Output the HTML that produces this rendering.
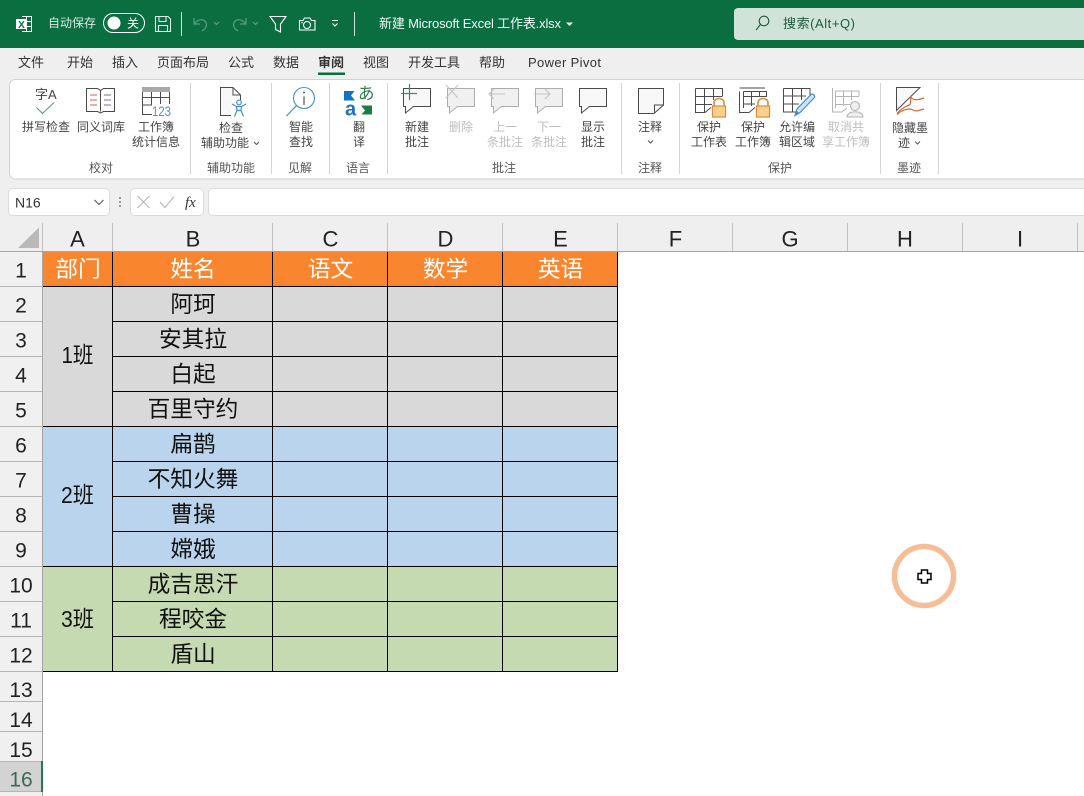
<!DOCTYPE html>
<html lang="zh-CN"><head><meta charset="utf-8"><title>Excel</title>
<style>
html,body{margin:0;padding:0;background:#fff;width:1084px;height:796px;overflow:hidden}
svg{display:block;position:absolute;left:0;top:0}
text{font-family:"Liberation Sans","Noto Sans CJK SC",sans-serif}
.t{font-size:13px;fill:#333}
.r{font-size:12px;fill:#444;text-anchor:middle}
.d{font-size:12px;fill:#bdbdbd;text-anchor:middle}
.g{font-size:12px;fill:#555;text-anchor:middle}
.h{font-size:22px;fill:#222;text-anchor:middle}
.n{font-size:21px;fill:#222;text-anchor:middle}
.c{font-size:22.7px;fill:#111;text-anchor:middle}
.o{font-size:22.7px;fill:#fff;text-anchor:middle}
.i{fill:none;stroke:#4a4a4a;stroke-width:1}
.b{fill:#f8f8f8;stroke:#4a4a4a;stroke-width:1}
.m{fill:none;stroke:#b5b5b5;stroke-width:1}
.x{fill:#f0f0f0;stroke:#adadad;stroke-width:1}
.l{fill:#fdd08f;stroke:#d98a3e;stroke-width:1.2}
.s{fill:none;stroke:#d98a3e;stroke-width:1.6}
</style></head><body>
<svg width="1084" height="796" viewBox="0 0 1084 796" xmlns="http://www.w3.org/2000/svg">
<!-- backgrounds -->
<rect width="1084" height="796" fill="#fff"/>
<rect width="1084" height="252" fill="#efefef"/>
<rect width="1084" height="48" fill="#0a6e41"/>

<!-- title bar -->
<g fill="none" stroke="#fff" stroke-width="1"><path d="M22 16.5H31.5V31.5H22"/><path d="M22 21.5H31.5M22 26.5H31.5M26.5 16.5V31.5"/></g>
<rect x="16" y="19" width="11" height="10" fill="#fff"/>
<text x="21.500" y="28" font-size="10" font-weight="bold" fill="#0a6e41" text-anchor="middle">X</text>
<text x="48" y="27" font-size="12" fill="#dbeae2">自动保存</text>
<rect x="103.500" y="13.500" width="41" height="19" rx="9.500" fill="none" stroke="#fff" stroke-width="1"/>
<circle cx="114" cy="23" r="6.500" fill="#fff"/>
<text x="133" y="27.500" font-size="12" fill="#fff" text-anchor="middle">关</text>
<g fill="none" stroke="#dfeee6" stroke-width="1.100"><path d="M155.500 16.500H168L170.500 19V31.500H155.500Z"/><path d="M159 16.500V21.500H166V16.500M158.500 31.500V25.500H167.500V31.500"/></g>
<path d="M181.500 12V36" stroke="#cfe3d8" stroke-width="1"/>
<g fill="none" stroke="#5b9f80" stroke-width="1.200"><path d="M194 18V24H200M194.500 23.500C198 19 204 18.500 206 22.500C207.500 26 205 29.500 202 31"/><path d="M246 18V24H240M245.500 23.500C242 19 236 18.500 234 22.500C232.500 26 235 29.500 238 31"/><path d="M214 22L216.500 24.500L219 22M253 22L255.500 24.500L258 22"/></g>
<g fill="none" stroke="#fff" stroke-width="1.100"><path d="M270 16.500H286L280.500 24V32L275.500 29.500V24Z"/><path d="M299.500 20.500H303L304.500 18H310L311.500 20.500H315V30H299.500Z"/><circle cx="307" cy="25" r="3.500"/><path d="M332 20.500H338M332.500 23.500L335 26L337.500 23.500"/></g>
<circle cx="302" cy="22.500" r="0.800" fill="#fff"/>
<path d="M354.500 12V36" stroke="#cfe3d8" stroke-width="1"/>
<text x="379" y="28" font-size="13" fill="#f2f7f4" textLength="182" lengthAdjust="spacing">新建 Microsoft Excel 工作表.xlsx</text>
<path d="M566 22.500H573L569.500 26Z" fill="#eef5f1"/>
<rect x="734" y="8" width="360" height="32" rx="4" fill="#cfe3d8"/>
<g fill="none" stroke="#20583e" stroke-width="1.100"><circle cx="764" cy="21" r="4.800"/><path d="M760.500 24.500L756 30"/></g>
<text x="783" y="28" font-size="13" fill="#21583f" textLength="72" lengthAdjust="spacing">搜索(Alt+Q)</text>

<!-- tabs -->
<text class="t" x="18" y="67">文件</text>
<text class="t" x="67" y="67">开始</text>
<text class="t" x="112" y="67">插入</text>
<text class="t" x="157" y="67">页面布局</text>
<text class="t" x="228" y="67">公式</text>
<text class="t" x="273" y="67">数据</text>
<text class="t" x="318" y="67" font-weight="bold">审阅</text>
<text class="t" x="363" y="67">视图</text>
<text class="t" x="408" y="67">开发工具</text>
<text class="t" x="479" y="67">帮助</text>
<text class="t" x="528" y="67" textLength="73" lengthAdjust="spacing">Power Pivot</text>
<rect x="318" y="72.500" width="27" height="2.500" fill="#0a6e41"/>

<!-- ribbon panel -->
<rect x="9.500" y="79.500" width="1090" height="99.500" rx="6" fill="#fff" stroke="#d2d2d2"/>
<g stroke="#d4d4d4"><path d="M190.500 83V174M271.500 83V174M329.500 83V174M387.500 83V174M621.500 83V174M679.500 83V174M880.500 83V174M938.500 83V174"/></g>

<!-- ribbon icons -->
<text x="35" y="99" font-size="13" fill="#444">字A</text>
<path d="M36.500 107.500L42.500 113.500L54 102.500" fill="none" stroke="#5c9c78" stroke-width="1.100"/>
<path class="i" d="M86.500 88.500H97.500L100.500 90.500L103.500 88.500H114.500V111.500H103.500L100.500 113L97.500 111.500H86.500ZM100.500 90.500V111.500"/>
<path d="M90 95H97M90 100H97M90 105H97" stroke="#c8654a" stroke-width="1"/>
<path d="M104 95H111M104 100H111M104 105H111" stroke="#777" stroke-width="1"/>
<rect x="142.500" y="87.500" width="27" height="27" class="i"/>
<rect x="142" y="87" width="28" height="5" fill="#a9a9a9"/>
<path class="i" d="M142.500 97.500H169.500M142.500 105H152M151.500 92V105M160.500 92V104"/>
<rect x="152" y="104" width="19" height="12" fill="#fff"/>
<text x="152" y="116" font-size="14" fill="#4b94cc" textLength="19" lengthAdjust="spacingAndGlyphs">123</text>

<path class="b" d="M233 87.500H220.500V115.500H231"/>
<path class="i" d="M233 87.500L240.500 95V100M233 87.500V95H240.500"/>
<g fill="none" stroke="#3f8fd0" stroke-width="1.200"><circle cx="239" cy="102.500" r="2.300"/><path d="M232 104L236.500 106.500H241.500L246 104M236.500 106.500L237 110.500L234.500 116.500M241.500 106.500L241 110.500L243.500 116.500M237 110.500H241"/></g>

<circle cx="304" cy="98" r="10.500" fill="none" stroke="#3f8fd0" stroke-width="1.100"/>
<path d="M296.500 105.500L286.500 116" stroke="#3f8fd0" stroke-width="1.200"/>
<path d="M304 96.500V105" stroke="#444" stroke-width="1.100"/><circle cx="304" cy="92.500" r="0.900" fill="#444"/>

<path d="M344 91H354.500L351 95.500L355 100.500H344Z" fill="#1272c4"/>
<text x="358" y="99" font-size="16.500" fill="#2f7d4f">あ</text>
<text x="350.500" y="115.500" font-size="20" fill="#1f72bd" text-anchor="middle" font-weight="bold">a</text>
<path d="M361 105.500H372V114.500H361.500L365 110.500Z" fill="#1c7c48"/>

<!-- comments -->
<path class="b" d="M403.500 88.500H430.500V106.500H413.500L405.500 113V106.500H403.500Z"/>
<path d="M409.500 84V100M401 93.500H417" stroke="#2f9468" stroke-width="1.200"/>
<path class="x" d="M447.500 88.500H474.500V106.500H457.500L449.500 113V106.500H447.500Z"/>
<path d="M446 85L458 98M458 85L446 98" stroke="#c4c4c4" stroke-width="1.100"/>
<path class="x" d="M491.500 88.500H518.500V106.500H501.500L493.500 113V106.500H491.500Z"/>
<path d="M489 94H505M494 89L489 94L494 99" stroke="#c4c4c4" stroke-width="1.100" fill="none"/>
<path class="x" d="M535.500 88.500H562.500V106.500H545.500L537.500 113V106.500H535.500Z"/>
<path d="M534 94H550M545 89L550 94L545 99" stroke="#c4c4c4" stroke-width="1.100" fill="none"/>
<path class="b" d="M579.500 88.500H606.500V106.500H589.500L581.500 113V106.500H579.500Z"/>

<path class="b" d="M638.500 88.500H663.500V105L654 113.500H638.500Z"/><path class="i" d="M663.500 105H654.500V113.500"/>

<!-- protect -->
<g class="i"><path d="M695.500 88.500H722.500V96M695.500 88.500V112.500H705L711 107.500M695.500 96.500H722.500M695.500 104.500H712M704.500 88.500V112M713.500 88.500V100"/></g>
<path class="s" d="M714 106V103C714 97 724 97 724 103V106"/><rect class="l" x="712.500" y="106" width="13" height="11"/>
<g class="i"><path d="M739.500 91.500V112.500H749L755 107.500M743.500 91.500H766.500V97M743.500 91.500V108M743.500 96.500H766.500M743.500 104H755M751.500 91.500V106M759.500 91.500V97M739.500 88H765"/></g>
<path class="s" d="M758 106V103C758 97 768 97 768 103V106"/><rect class="l" x="756.500" y="106" width="13" height="11"/>
<g class="i"><path d="M783.500 88.500H810V95M783.500 88.500V112H797M783.500 96H806M783.500 104H799M792.500 88.500V112M801.500 88.500V100"/></g>
<path d="M795 115.500L797 109L811 94.500C813 93 816 96 814 98L800 112.500Z" fill="#cfe4f6" stroke="#3f8fd0" stroke-width="1.200"/>
<path d="M795 115.500L796.500 110.500L799.500 113.500Z" fill="#3f8fd0"/>
<g class="m"><path d="M832.500 88V112H842L847 108M835.500 91H859V96M835.500 91V108M835.500 96.500H859M835.500 104.500H850M843.500 91V106M851.500 91V100"/></g>
<circle cx="855" cy="106" r="4.500" fill="#eee" stroke="#b5b5b5" stroke-width="1.100"/>
<path d="M847 117C847 110 863 110 863 117Z" fill="#eee" stroke="#b5b5b5" stroke-width="1.100"/>

<!-- ink -->
<path class="b" d="M896.500 87.500H920L896.500 110.500Z"/>
<path d="M924 98C918 100 913 101 911 97C910 102 912 105 907 106C903 108 899 111 897 113.500M897 114.500C903 109 910 108 913 110C917 112 920 110 924 109" fill="none" stroke="#d2693c" stroke-width="1.200"/>

<!-- ribbon labels -->
<text class="r" x="46" y="131">拼写检查</text>
<text class="r" x="101" y="131">同义词库</text>
<text class="r" x="156" y="131">工作簿</text><text class="r" x="156" y="146">统计信息</text>
<text class="r" x="231" y="132">检查</text><text class="r" x="225" y="147">辅助功能</text>
<path d="M254 142L256.500 144.500L259 142" fill="none" stroke="#555"/>
<text class="r" x="301" y="131">智能</text><text class="r" x="301" y="146">查找</text>
<text class="r" x="359" y="131">翻</text><text class="r" x="359" y="146">译</text>
<text class="r" x="417" y="131">新建</text><text class="r" x="417" y="146">批注</text>
<text class="d" x="461" y="131">删除</text>
<text class="d" x="505" y="131">上一</text><text class="d" x="505" y="146">条批注</text>
<text class="d" x="549" y="131">下一</text><text class="d" x="549" y="146">条批注</text>
<text class="r" x="593" y="131">显示</text><text class="r" x="593" y="146">批注</text>
<text class="r" x="650" y="131">注释</text>
<path d="M648 140.500L650.500 143L653 140.500" fill="none" stroke="#555"/>
<text class="r" x="709" y="131">保护</text><text class="r" x="709" y="146">工作表</text>
<text class="r" x="753" y="131">保护</text><text class="r" x="753" y="146">工作簿</text>
<text class="r" x="797" y="131">允许编</text><text class="r" x="797" y="146">辑区域</text>
<text class="d" x="846" y="131">取消共</text><text class="d" x="846" y="146">享工作簿</text>
<text class="r" x="910" y="132">隐藏墨</text><text class="r" x="904" y="147">迹</text>
<path d="M915 141.500L917.500 144L920 141.500" fill="none" stroke="#555"/>

<text class="g" x="101" y="172">校对</text>
<text class="g" x="231" y="172">辅助功能</text>
<text class="g" x="300" y="172">见解</text>
<text class="g" x="358" y="172">语言</text>
<text class="g" x="504" y="172">批注</text>
<text class="g" x="650" y="172">注释</text>
<text class="g" x="780" y="172">保护</text>
<text class="g" x="909" y="172">墨迹</text>

<!-- formula bar -->
<rect x="8.500" y="188.500" width="101" height="27" rx="4" fill="#fff" stroke="#dadada"/>
<text x="15" y="207.500" font-size="14" fill="#333">N16</text>
<path d="M94.500 200L99 204.500L103.500 200" fill="none" stroke="#555" stroke-width="1.100"/>
<g fill="#999"><rect x="119" y="197" width="2" height="2"/><rect x="119" y="201" width="2" height="2"/><rect x="119" y="205" width="2" height="2"/></g>
<rect x="130.500" y="188.500" width="73" height="27" rx="4" fill="#fff" stroke="#dadada"/>
<path d="M137.500 196L149.500 208M149.500 196L137.500 208M160 202L165 207.500L174 196.500" fill="none" stroke="#b5b5b5" stroke-width="1.100"/>
<text x="185" y="207" font-size="15" font-style="italic" fill="#333" style="font-family:'Liberation Serif',serif">fx</text>
<rect x="208.500" y="188.500" width="890" height="27" rx="4" fill="#fff" stroke="#dadada"/>

<!-- select all + headers -->
<path d="M18 248L39 227.500V248Z" fill="#b9b9b9"/>
<path d="M0 251.500H1084" stroke="#a5a5a5"/>
<g stroke="#c0c0c0"><path d="M42.500 223V251M112.500 223V251M272.500 223V251M387.500 223V251M502.500 223V251M617.500 223V251M732.500 223V251M847.500 223V251M962.500 223V251M1077.500 223V251"/></g>
<text class="h" x="77.500" y="246.500">A</text>
<text class="h" x="193" y="246.500">B</text>
<text class="h" x="330.500" y="246.500">C</text>
<text class="h" x="445.500" y="246.500">D</text>
<text class="h" x="560.500" y="246.500">E</text>
<text class="h" x="675.500" y="246.500">F</text>
<text class="h" x="790" y="246.500">G</text>
<text class="h" x="905" y="246.500">H</text>
<text class="h" x="1020" y="246.500">I</text>

<!-- row header -->
<rect x="0" y="252" width="42" height="544" fill="#f0f0f0"/>
<rect x="0" y="762" width="42" height="30" fill="#d3d3d3"/>
<path d="M42.500 252V796" stroke="#a5a5a5"/>
<g stroke="#b5b5b5"><path d="M0 286.500H42M0 321.500H42M0 356.500H42M0 391.500H42M0 426.500H42M0 461.500H42M0 496.500H42M0 531.500H42M0 566.500H42M0 601.500H42M0 636.500H42M0 671.500H42M0 701.500H42M0 731.500H42M0 761.500H42M0 791.500H42"/></g>
<rect x="41" y="761" width="2" height="31" fill="#1f7a4d"/>
<text class="n" x="21" y="277.500">1</text>
<text class="n" x="21" y="312.500">2</text>
<text class="n" x="21" y="347.500">3</text>
<text class="n" x="21" y="382.500">4</text>
<text class="n" x="21" y="417.500">5</text>
<text class="n" x="21" y="452.500">6</text>
<text class="n" x="21" y="487.500">7</text>
<text class="n" x="21" y="522.500">8</text>
<text class="n" x="21" y="557.500">9</text>
<text class="n" x="21" y="592.500">10</text>
<text class="n" x="21" y="627.500">11</text>
<text class="n" x="21" y="662.500">12</text>
<text class="n" x="21" y="697">13</text>
<text class="n" x="21" y="727">14</text>
<text class="n" x="21" y="757">15</text>
<text class="n" x="21" y="786.500" style="fill:#3d6a55">16</text>

<!-- cells -->
<rect x="43" y="252" width="575" height="35" fill="#f9862f"/>
<rect x="43" y="287" width="575" height="140" fill="#d9d9d9"/>
<rect x="43" y="427" width="575" height="140" fill="#b9d4ec"/>
<rect x="43" y="567" width="575" height="105" fill="#c6dab2"/>
<g stroke="#000" stroke-width="1">
<path d="M112.500 252V672M272.500 252V672M387.500 252V672M502.500 252V672M617.500 252V672"/>
<path d="M43 286.500H618M43 426.500H618M43 566.500H618M43 671.500H618"/>
<path d="M113 321.500H618M113 356.500H618M113 391.500H618M113 461.500H618M113 496.500H618M113 531.500H618M113 601.500H618M113 636.500H618"/>
</g>
<text class="o" x="78" y="277">部门</text>
<text class="o" x="193" y="277">姓名</text>
<text class="o" x="330.500" y="277">语文</text>
<text class="o" x="445.500" y="277">数学</text>
<text class="o" x="560.500" y="277">英语</text>
<text class="c" x="77.500" y="363" textLength="32" lengthAdjust="spacingAndGlyphs">1班</text>
<text class="c" x="77.500" y="503" textLength="33" lengthAdjust="spacingAndGlyphs">2班</text>
<text class="c" x="77.500" y="627" textLength="33" lengthAdjust="spacingAndGlyphs">3班</text>
<text class="c" x="193" y="312">阿珂</text>
<text class="c" x="193" y="347">安其拉</text>
<text class="c" x="193" y="382">白起</text>
<text class="c" x="193" y="417">百里守约</text>
<text class="c" x="193" y="452">扁鹊</text>
<text class="c" x="193" y="487">不知火舞</text>
<text class="c" x="193" y="522">曹操</text>
<text class="c" x="193" y="557">嫦娥</text>
<text class="c" x="193" y="592">成吉思汗</text>
<text class="c" x="193" y="627">程咬金</text>
<text class="c" x="193" y="662">盾山</text>

<!-- cursor ring -->
<circle cx="924" cy="576" r="29.500" fill="none" stroke="#f6bd96" stroke-width="5.500"/>
<path d="M921.500 570H927.500V573.500H931V579.500H927.500V583H921.500V579.500H918V573.500H921.500Z" fill="#fff" stroke="#000" stroke-width="1.500"/>
</svg>
</body></html>
